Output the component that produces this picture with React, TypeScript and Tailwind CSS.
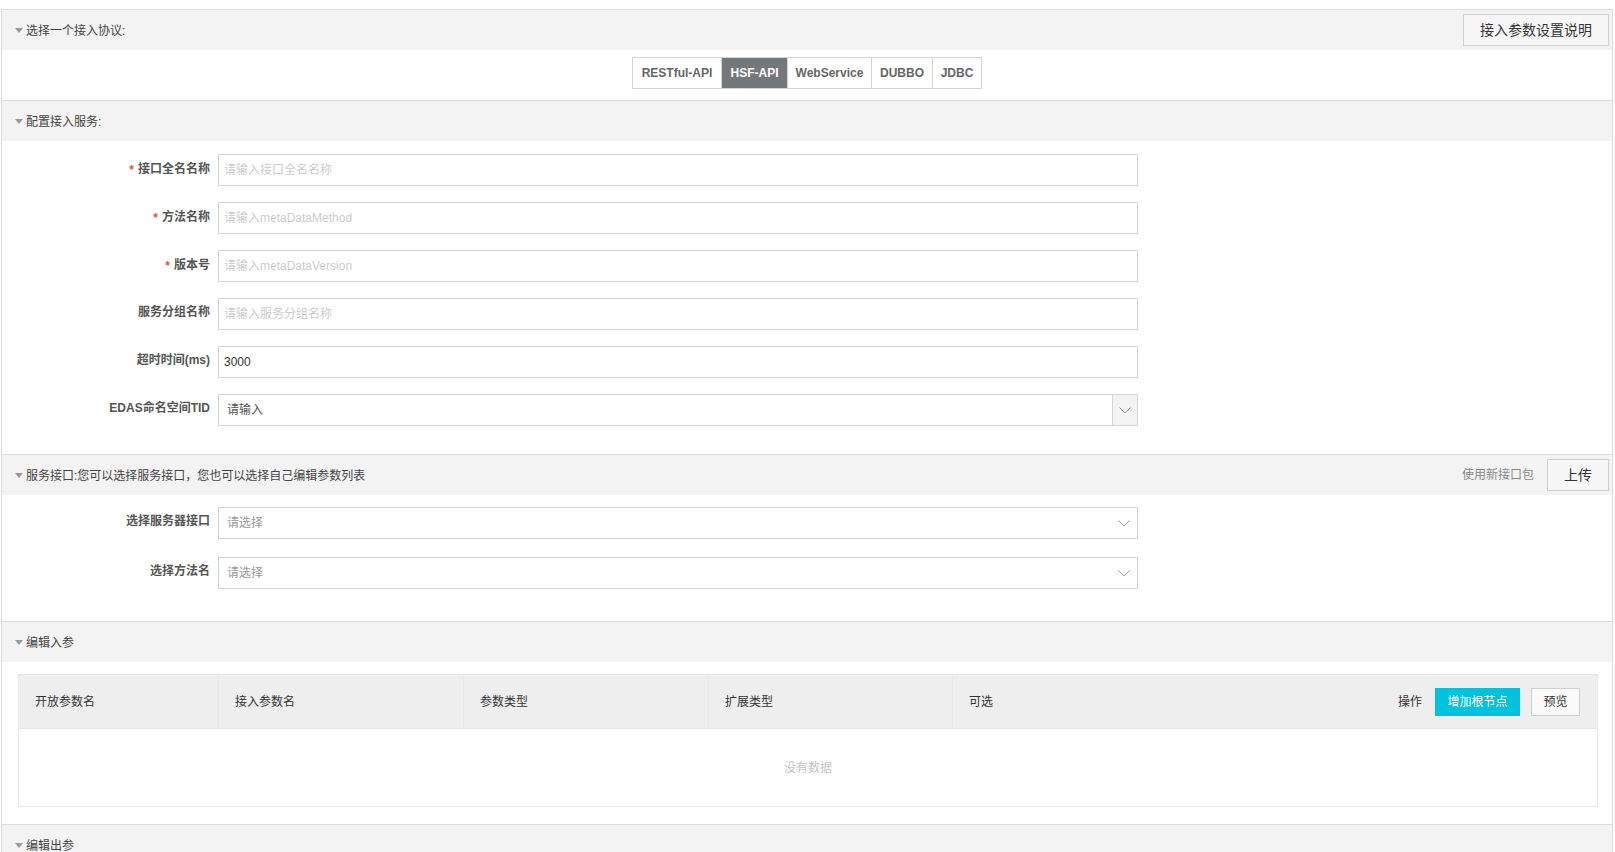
import React from "react";

const FONT = "font-['Liberation_Sans','Noto_Sans_CJK_SC',sans-serif]";

function Caret() {
  return (
    <span className="inline-block w-0 h-0 border-l-[4px] border-r-[4px] border-t-[5px] border-l-transparent border-r-transparent border-t-[#999] mr-[3px]" />
  );
}

function SectionHeader({ title, right }: { title: string; right?: React.ReactNode }) {
  return (
    <div className="h-[41px] border-t border-[#dcdcdc] bg-[#f3f3f3] flex items-center justify-between pl-[13px] pr-[3px]">
      <div className="flex items-center text-[12px] text-[#444] pt-[1px]">
        <Caret />
        <span>{title}</span>
      </div>
      {right}
    </div>
  );
}

function Chevron() {
  return (
    <svg width="12" height="7" viewBox="0 0 12 7" fill="none">
      <polyline points="0.5,0.5 6,6 11.5,0.5" stroke="#9a9a9a" strokeWidth="1" fill="none" />
    </svg>
  );
}

function Label({ text, required }: { text: string; required?: boolean }) {
  return (
    <div className="w-[208px] shrink-0 flex justify-end items-center pt-[4px] leading-[20px] self-start">
      {required && <span className="text-[#e4543f] font-bold text-[12px] mr-[4px] mt-[2px]">*</span>}
      <span className="text-[12px] font-bold text-[#555]">{text}</span>
    </div>
  );
}

function InputRow({ label, placeholder, value, required }: { label: string; placeholder?: string; value?: string; required?: boolean }) {
  return (
    <div className="flex">
      <Label text={label} required={required} />
      <div className="ml-[8px] w-[920px] h-[32px] border border-[#d4d4d4] bg-white flex items-center pl-[5px] text-[12px]">
        {value ? <span className="text-[#333]">{value}</span> : <span className="text-[#cdcdcd]">{placeholder}</span>}
      </div>
    </div>
  );
}

function SelectRow({ label, placeholder }: { label: string; placeholder: string }) {
  return (
    <div className="flex">
      <Label text={label} />
      <div className="ml-[8px] w-[920px] h-[32px] border border-[#d4d4d4] bg-white flex items-center justify-between pl-[8px] pr-[7px] text-[12px]">
        <span className="text-[#999]">{placeholder}</span>
        <Chevron />
      </div>
    </div>
  );
}

export default function App() {
  const tabs = [
    { t: "RESTful-API", w: "w-[88px]" },
    { t: "HSF-API", w: "w-[66px]", active: true },
    { t: "WebService", w: "w-[84px]" },
    { t: "DUBBO", w: "w-[61px]" },
    { t: "JDBC", w: "w-[49px]" },
  ];
  return (
    <div className={`${FONT} bg-white w-full h-[852px] overflow-hidden pt-[9px]`}>
      <div className="ml-[1px] w-[1612px] border-l border-r border-[#dcdcdc]">
        {/* Section 1 */}
        <SectionHeader
          title="选择一个接入协议:"
          right={
            <button className="h-[32px] w-[146px] border border-[#cfcfcf] bg-[#f7f7f7] text-[14px] text-[#333]">
              接入参数设置说明
            </button>
          }
        />
        <div className="h-[50px] bg-white flex justify-center pt-[7px]">
          <div className="flex h-[32px] border border-[#d4d4d4]">
            {tabs.map((tab, i) => (
              <div
                key={tab.t}
                className={`${tab.w} flex items-center justify-center text-[12px] font-bold ${i > 0 ? "border-l border-[#d4d4d4]" : ""} ${
                  tab.active ? "bg-[#75787b] text-white" : "bg-white text-[#666]"
                }`}
              >
                {tab.t}
              </div>
            ))}
          </div>
        </div>

        {/* Section 2 */}
        <SectionHeader title="配置接入服务:" />
        <div className="bg-white pt-[13px] pb-[28px] flex flex-col gap-[16px]">
          <InputRow label="接口全名名称" placeholder="请输入接口全名名称" required />
          <InputRow label="方法名称" placeholder="请输入metaDataMethod" required />
          <InputRow label="版本号" placeholder="请输入metaDataVersion" required />
          <InputRow label="服务分组名称" placeholder="请输入服务分组名称" />
          <InputRow label="超时时间(ms)" value="3000" />
          <div className="flex">
            <Label text="EDAS命名空间TID" />
            <div className="ml-[8px] w-[920px] h-[32px] border border-[#d4d4d4] bg-white flex items-center text-[12px]">
              <span className="flex-1 pl-[8px] text-[#555]">请输入</span>
              <div className="w-[25px] h-full bg-[#f3f3f3] border-l border-[#d4d4d4] flex items-center justify-center">
                <Chevron />
              </div>
            </div>
          </div>
        </div>

        {/* Section 3 */}
        <SectionHeader
          title="服务接口:您可以选择服务接口，您也可以选择自己编辑参数列表"
          right={
            <div className="flex items-center">
              <span className="text-[12px] text-[#888] mr-[13px]">使用新接口包</span>
              <button className="h-[32px] w-[62px] border border-[#cfcfcf] bg-[#f7f7f7] text-[14px] text-[#333]">上传</button>
            </div>
          }
        />
        <div className="bg-white pt-[12px] pb-[32px] flex flex-col gap-[18px]">
          <SelectRow label="选择服务器接口" placeholder="请选择" />
          <SelectRow label="选择方法名" placeholder="请选择" />
        </div>

        {/* Section 4 */}
        <SectionHeader title="编辑入参" />
        <div className="bg-white pt-[12px] pb-[17px] pl-[16px] pr-[14px]">
          <div className="border border-[#e8e8e8]">
            <div className="h-[53px] bg-[#eeeeee] flex items-stretch text-[12px] text-[#333]">
              <div className="w-[200px] border-r border-[#e9e9e9] flex items-center pl-[16px]">开放参数名</div>
              <div className="w-[245px] border-r border-[#e9e9e9] flex items-center pl-[16px]">接入参数名</div>
              <div className="w-[245px] border-r border-[#e9e9e9] flex items-center pl-[16px]">参数类型</div>
              <div className="w-[244px] border-r border-[#e9e9e9] flex items-center pl-[16px]">扩展类型</div>
              <div className="w-[244px] flex items-center pl-[16px]">可选</div>
              <div className="flex-1 flex items-center justify-end pr-[17px]">
                <span className="mr-[13px]">操作</span>
                <button className="h-[28px] w-[85px] bg-[#00c1de] text-white text-[12px]">增加根节点</button>
                <button className="ml-[11px] h-[28px] w-[49px] border border-[#cfcfcf] bg-[#fafafa] text-[#333] text-[12px]">预览</button>
              </div>
            </div>
            <div className="h-[78px] border-t border-[#e8e8e8] flex items-center justify-center text-[12px] text-[#c4c4c4]">
              没有数据
            </div>
          </div>
        </div>

        {/* Section 5 */}
        <SectionHeader title="编辑出参" />
        <div className="h-[40px] bg-white" />
      </div>
    </div>
  );
}
